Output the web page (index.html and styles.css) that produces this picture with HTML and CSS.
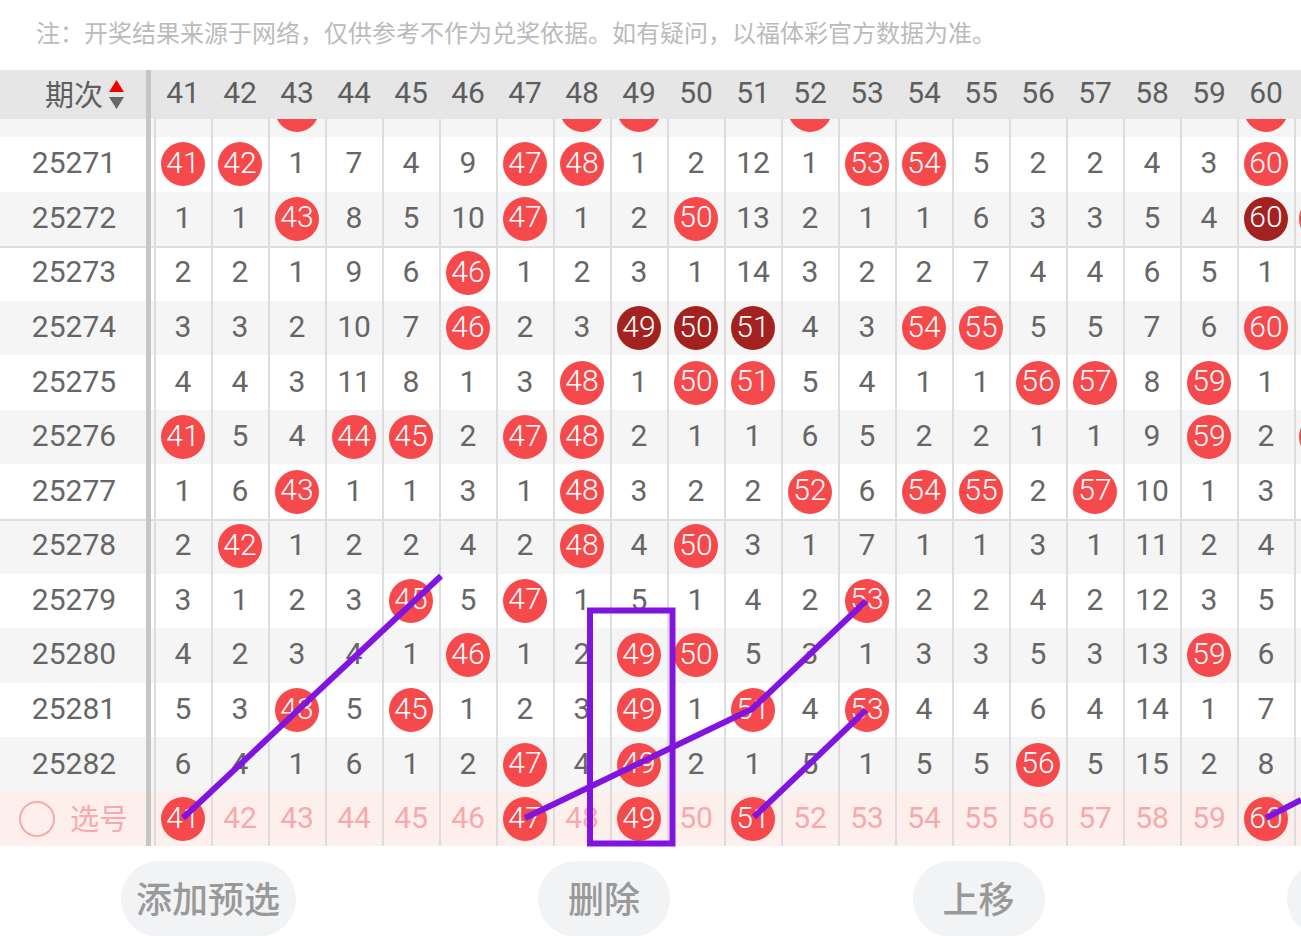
FILE: index.html
```html
<!DOCTYPE html>
<html lang="zh-CN">
<head>
<meta charset="utf-8">
<title>走势图</title>
<link rel="stylesheet" href="styles.css">
</head>
<body>
<div class="page">
  <p class="note">注：开奖结果来源于网络，仅供参考不作为兑奖依据。如有疑问，以福体彩官方数据为准。</p>

  <div class="row head">
    <div class="first"><span>期次</span><svg class="sort" viewBox="0 0 15 29" width="15" height="29"><path d="M7.5 0L15 12H0z" fill="#f40000"/><path d="M0 17h15L7.5 29z" fill="#666"/></svg></div>
    <span class="h">41</span><span class="h">42</span><span class="h">43</span><span class="h">44</span><span class="h">45</span><span class="h">46</span><span class="h">47</span><span class="h">48</span><span class="h">49</span><span class="h">50</span><span class="h">51</span><span class="h">52</span><span class="h">53</span><span class="h">54</span><span class="h">55</span><span class="h">56</span><span class="h">57</span><span class="h">58</span><span class="h">59</span><span class="h">60</span><span class="h"></span>
  </div>

  <div class="body">
    <div class="rows">
      <div class="row grey"><div class="first">25270</div><span class="c">2</span><span class="c">2</span><span class="c"><b>43</b></span><span class="c">6</span><span class="c">3</span><span class="c">8</span><span class="c">3</span><span class="c"><b>48</b></span><span class="c"><b>49</b></span><span class="c">1</span><span class="c">11</span><span class="c"><b>52</b></span><span class="c">13</span><span class="c">2</span><span class="c">4</span><span class="c">1</span><span class="c">1</span><span class="c">3</span><span class="c">2</span><span class="c"><b>60</b></span><span class="c"></span></div>
      <div class="row"><div class="first">25271</div><span class="c"><b>41</b></span><span class="c"><b>42</b></span><span class="c">1</span><span class="c">7</span><span class="c">4</span><span class="c">9</span><span class="c"><b>47</b></span><span class="c"><b>48</b></span><span class="c">1</span><span class="c">2</span><span class="c">12</span><span class="c">1</span><span class="c"><b>53</b></span><span class="c"><b>54</b></span><span class="c">5</span><span class="c">2</span><span class="c">2</span><span class="c">4</span><span class="c">3</span><span class="c"><b>60</b></span><span class="c"></span></div>
      <div class="row grey"><div class="first">25272</div><span class="c">1</span><span class="c">1</span><span class="c"><b>43</b></span><span class="c">8</span><span class="c">5</span><span class="c">10</span><span class="c"><b>47</b></span><span class="c">1</span><span class="c">2</span><span class="c"><b>50</b></span><span class="c">13</span><span class="c">2</span><span class="c">1</span><span class="c">1</span><span class="c">6</span><span class="c">3</span><span class="c">3</span><span class="c">5</span><span class="c">4</span><span class="c"><b class="d">60</b></span><span class="c"><b class="edge"></b></span></div>
      <div class="row mark"><div class="first">25273</div><span class="c">2</span><span class="c">2</span><span class="c">1</span><span class="c">9</span><span class="c">6</span><span class="c"><b>46</b></span><span class="c">1</span><span class="c">2</span><span class="c">3</span><span class="c">1</span><span class="c">14</span><span class="c">3</span><span class="c">2</span><span class="c">2</span><span class="c">7</span><span class="c">4</span><span class="c">4</span><span class="c">6</span><span class="c">5</span><span class="c">1</span><span class="c"></span></div>
      <div class="row grey"><div class="first">25274</div><span class="c">3</span><span class="c">3</span><span class="c">2</span><span class="c">10</span><span class="c">7</span><span class="c"><b>46</b></span><span class="c">2</span><span class="c">3</span><span class="c"><b class="d">49</b></span><span class="c"><b class="d">50</b></span><span class="c"><b class="d">51</b></span><span class="c">4</span><span class="c">3</span><span class="c"><b>54</b></span><span class="c"><b>55</b></span><span class="c">5</span><span class="c">5</span><span class="c">7</span><span class="c">6</span><span class="c"><b>60</b></span><span class="c"></span></div>
      <div class="row"><div class="first">25275</div><span class="c">4</span><span class="c">4</span><span class="c">3</span><span class="c">11</span><span class="c">8</span><span class="c">1</span><span class="c">3</span><span class="c"><b>48</b></span><span class="c">1</span><span class="c"><b>50</b></span><span class="c"><b>51</b></span><span class="c">5</span><span class="c">4</span><span class="c">1</span><span class="c">1</span><span class="c"><b>56</b></span><span class="c"><b>57</b></span><span class="c">8</span><span class="c"><b>59</b></span><span class="c">1</span><span class="c"></span></div>
      <div class="row grey"><div class="first">25276</div><span class="c"><b>41</b></span><span class="c">5</span><span class="c">4</span><span class="c"><b>44</b></span><span class="c"><b>45</b></span><span class="c">2</span><span class="c"><b>47</b></span><span class="c"><b>48</b></span><span class="c">2</span><span class="c">1</span><span class="c">1</span><span class="c">6</span><span class="c">5</span><span class="c">2</span><span class="c">2</span><span class="c">1</span><span class="c">1</span><span class="c">9</span><span class="c"><b>59</b></span><span class="c">2</span><span class="c"><b class="edge"></b></span></div>
      <div class="row"><div class="first">25277</div><span class="c">1</span><span class="c">6</span><span class="c"><b>43</b></span><span class="c">1</span><span class="c">1</span><span class="c">3</span><span class="c">1</span><span class="c"><b>48</b></span><span class="c">3</span><span class="c">2</span><span class="c">2</span><span class="c"><b>52</b></span><span class="c">6</span><span class="c"><b>54</b></span><span class="c"><b>55</b></span><span class="c">2</span><span class="c"><b>57</b></span><span class="c">10</span><span class="c">1</span><span class="c">3</span><span class="c"></span></div>
      <div class="row grey mark"><div class="first">25278</div><span class="c">2</span><span class="c"><b>42</b></span><span class="c">1</span><span class="c">2</span><span class="c">2</span><span class="c">4</span><span class="c">2</span><span class="c"><b>48</b></span><span class="c">4</span><span class="c"><b>50</b></span><span class="c">3</span><span class="c">1</span><span class="c">7</span><span class="c">1</span><span class="c">1</span><span class="c">3</span><span class="c">1</span><span class="c">11</span><span class="c">2</span><span class="c">4</span><span class="c"></span></div>
      <div class="row"><div class="first">25279</div><span class="c">3</span><span class="c">1</span><span class="c">2</span><span class="c">3</span><span class="c"><b>45</b></span><span class="c">5</span><span class="c"><b>47</b></span><span class="c">1</span><span class="c">5</span><span class="c">1</span><span class="c">4</span><span class="c">2</span><span class="c"><b>53</b></span><span class="c">2</span><span class="c">2</span><span class="c">4</span><span class="c">2</span><span class="c">12</span><span class="c">3</span><span class="c">5</span><span class="c"></span></div>
      <div class="row grey"><div class="first">25280</div><span class="c">4</span><span class="c">2</span><span class="c">3</span><span class="c">4</span><span class="c">1</span><span class="c"><b>46</b></span><span class="c">1</span><span class="c">2</span><span class="c"><b>49</b></span><span class="c"><b>50</b></span><span class="c">5</span><span class="c">3</span><span class="c">1</span><span class="c">3</span><span class="c">3</span><span class="c">5</span><span class="c">3</span><span class="c">13</span><span class="c"><b>59</b></span><span class="c">6</span><span class="c"></span></div>
      <div class="row"><div class="first">25281</div><span class="c">5</span><span class="c">3</span><span class="c"><b>43</b></span><span class="c">5</span><span class="c"><b>45</b></span><span class="c">1</span><span class="c">2</span><span class="c">3</span><span class="c"><b>49</b></span><span class="c">1</span><span class="c"><b>51</b></span><span class="c">4</span><span class="c"><b>53</b></span><span class="c">4</span><span class="c">4</span><span class="c">6</span><span class="c">4</span><span class="c">14</span><span class="c">1</span><span class="c">7</span><span class="c"></span></div>
      <div class="row grey"><div class="first">25282</div><span class="c">6</span><span class="c">4</span><span class="c">1</span><span class="c">6</span><span class="c">1</span><span class="c">2</span><span class="c"><b>47</b></span><span class="c">4</span><span class="c"><b>49</b></span><span class="c">2</span><span class="c">1</span><span class="c">5</span><span class="c">1</span><span class="c">5</span><span class="c">5</span><span class="c"><b>56</b></span><span class="c">5</span><span class="c">15</span><span class="c">2</span><span class="c">8</span><span class="c"></span></div>
      <div class="row sel"><div class="first"><i class="radio"></i><span>选号</span></div><span class="c"><b>41</b></span><span class="c">42</span><span class="c">43</span><span class="c">44</span><span class="c">45</span><span class="c">46</span><span class="c"><b>47</b></span><span class="c">48</span><span class="c"><b>49</b></span><span class="c">50</span><span class="c"><b>51</b></span><span class="c">52</span><span class="c">53</span><span class="c">54</span><span class="c">55</span><span class="c">56</span><span class="c">57</span><span class="c">58</span><span class="c">59</span><span class="c"><b>60</b></span><span class="c"></span></div>
    </div>
  </div>

  <div class="actions">
    <button class="btn wide">添加预选</button>
    <button class="btn">删除</button>
    <button class="btn">上移</button>
    <button class="btn"></button>
  </div>

  <svg class="overlay" viewBox="0 0 1301 936" width="1301" height="936" fill="none" stroke="#8214e0" stroke-width="6">
    <path d="M183 818L441 576"/>
    <path d="M525 818L752 709L866 601"/>
    <path d="M754 817L866 710"/>
    <path d="M1266 818L1301 800"/>
    <rect x="590" y="610.5" width="82.5" height="233"/>
  </svg>
</div>
</body>
</html>
```

FILE: styles.css
```css
* { box-sizing: border-box; }
html, body { margin: 0; padding: 0; background: #fff; }
body { width: 1301px; height: 936px; overflow: hidden; font-family: Roboto, "Noto Sans CJK SC", sans-serif; color: #666; }
.page { position: relative; width: 1301px; height: 936px; overflow: hidden; }

.note { margin: 0; height: 70px; padding: 15px 0 0 36px; font: 24px/33px "Noto Sans CJK SC", sans-serif; color: #bbb; white-space: nowrap; }

.row { display: grid; grid-template-columns: 154.5px repeat(21, 57px); height: 54.58px; align-items: stretch; font-size: 30px; color: #666; width: 1352px; }
.first { display: flex; align-items: center; justify-content: center; width: 151px; border-right: 5px solid #c6c6c6; padding: 0 0 3px 2px; }
.c, .h { display: flex; align-items: center; justify-content: center; }
.c { box-shadow: inset 1px 0 #ddd, -1px 0 #ddd; padding-bottom: 3px; }

.head { height: 49px; background: #e6e6e6; color: #5e5e5e; }
.head .first { justify-content: flex-start; padding: 0 0 4px 45px; font-family: "Noto Sans CJK SC", sans-serif; font-size: 29px; gap: 6px; }
.sort { flex: none; margin-top: 4px; }
.h { padding-bottom: 4px; }

.body { height: 727px; overflow: hidden; }
.rows { margin-top: -36.58px; }
.grey { background-color: #f5f5f5; }
.mark { background-image: linear-gradient(#dedede, #dedede); background-size: 100% 2px; background-repeat: no-repeat; }

.c b { display: flex; align-items: center; justify-content: center; flex: none; width: 44px; height: 44px; border-radius: 50%; background: #f5494c; color: #fff; font-weight: 300; font-size: 30px; padding-bottom: 4px; margin-top: 3px; }
.c b.d { background: #a32220; }
.c b.edge { margin-right: 5px; }

.sel { background: #fdf0ec; color: #f7a9ad; }
.sel .first { justify-content: flex-start; padding: 0 0 4px 19px; gap: 15px; font: 29px "Noto Sans CJK SC", sans-serif; }
.radio { flex: none; width: 36px; height: 36px; border: 2px solid #f7a9ad; border-radius: 50%; margin-top: 3px; }

.actions { display: flex; gap: 242.5px; padding: 15px 0 0 120.5px; }
.btn { flex: none; width: 132px; height: 76px; padding: 0 0 5px; border: 0; border-radius: 38px; background: #f2f3f5; color: #999; font: 500 36px "Noto Sans CJK SC", sans-serif; }
.btn.wide { width: 175px; }

.overlay { position: absolute; left: 0; top: 0; pointer-events: none; }
```
